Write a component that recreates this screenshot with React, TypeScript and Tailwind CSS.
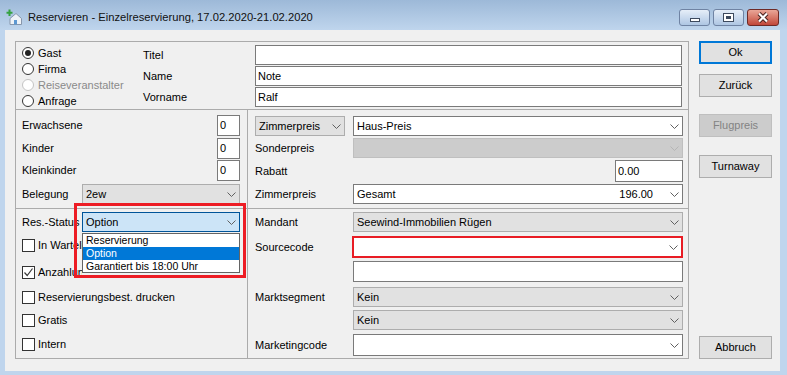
import React from "react";

const Chevron = ({ color = "#606060" }: { color?: string }) => (
  <svg width="9" height="5" viewBox="0 0 9 5">
    <path d="M0.5 0.5 L4.5 4.5 L8.5 0.5" stroke={color} fill="none" strokeWidth="1" />
  </svg>
);

type ComboProps = {
  text?: string;
  right?: string;
  variant?: "white" | "gray" | "disabled" | "focus" | "red";
  cls: string;
};

const Combo = ({ text = "", right, variant = "white", cls }: ComboProps) => {
  const v =
    variant === "white"
      ? "bg-white border border-[#7a7a7a]"
      : variant === "gray"
      ? "bg-[#e1e1e1] border border-[#adadad]"
      : variant === "disabled"
      ? "bg-[#cccccc] border border-[#bfbfbf]"
      : variant === "focus"
      ? "bg-[#cce4f7] border border-[#005499]"
      : "bg-white border-2 border-[#e81c24]";
  return (
    <div className={`flex items-center ${v} ${cls}`}>
      <span className="flex-1 pl-[3px] whitespace-nowrap overflow-hidden">{text}</span>
      {right && <span className="mr-[13px]">{right}</span>}
      <div className="w-[16px] flex justify-center">
        <Chevron color={variant === "disabled" ? "#b5b5b5" : "#606060"} />
      </div>
    </div>
  );
};

const Input = ({ text = "", cls }: { text?: string; cls: string }) => (
  <div className={`flex items-center bg-white border border-[#7a7a7a] pl-[2px] ${cls}`}>{text}</div>
);

const Radio = ({ label, checked, disabled }: { label: string; checked?: boolean; disabled?: boolean }) => (
  <div className="h-[16px] flex items-center">
    <div
      className={`w-[12px] h-[12px] rounded-full border bg-white flex items-center justify-center ${
        disabled ? "border-[#c4c4c4] bg-[#f4f4f4]" : "border-[#333333]"
      }`}
    >
      {checked && <div className="w-[6px] h-[6px] rounded-full bg-[#222222]" />}
    </div>
    <span className={`ml-[4px] ${disabled ? "text-[#8a8a8a]" : ""}`}>{label}</span>
  </div>
);

const Check = ({ label, checked, cls, clip }: { label: string; checked?: boolean; cls: string; clip?: boolean }) => (
  <div className={`h-[13px] flex items-center whitespace-nowrap ${cls}`}>
    <div className="w-[13px] h-[13px] border border-[#333333] bg-white flex items-center justify-center shrink-0">
      {checked && (
        <svg width="11" height="11" viewBox="0 0 11 11">
          <path d="M1.5 5.5 L4.2 8.5 L9.5 1.5" stroke="#3a3a3a" strokeWidth="1.2" fill="none" />
        </svg>
      )}
    </div>
    <span className={`ml-[3px] ${clip ? "w-[44px] overflow-hidden" : ""}`}>{label}</span>
  </div>
);

const Btn = ({ label, cls = "", variant = "normal" }: { label: string; cls?: string; variant?: "normal" | "default" | "disabled" }) => {
  const v =
    variant === "default"
      ? "border-2 border-[#0078d7] bg-[#e1e1e1]"
      : variant === "disabled"
      ? "border border-[#bfbfbf] bg-[#cccccc] text-[#838383]"
      : "border border-[#adadad] bg-[#e1e1e1]";
  return <div className={`w-[73px] h-[23px] flex items-center justify-center ${v} ${cls}`}>{label}</div>;
};

export default function App() {
  return (
    <div className="relative w-[787px] h-[375px] overflow-hidden bg-[#bfd5ed] text-[11px] text-black font-['Liberation_Sans',Arial,sans-serif]">
      {/* Title bar */}
      <div className="h-[30px] flex items-start pt-[9px] bg-gradient-to-b from-[#9db9d8] to-[#bfd5ed]">
        <div className="ml-[6px] w-[16px] h-[16px]">
          <svg width="16" height="16" viewBox="0 0 16 16">
            <path d="M4 9.5 L10 4.5 L15.5 9.5 L15.5 15.5 L4 15.5 Z" fill="#eef2f7" stroke="#8796ab" strokeWidth="1" />
            <rect x="8" y="11" width="3" height="4.5" fill="#5d98d2" />
            <path d="M3.5 0.5 V7 M0.5 3.7 H6.5" stroke="#35a240" strokeWidth="2" />
          </svg>
        </div>
        <div className="ml-[6px] leading-[16px] text-[11.2px] text-[#111111]">
          Reservieren - Einzelreservierung, 17.02.2020-21.02.2020
        </div>
        <div className="ml-auto mr-[8px] flex gap-[3px]">
          <div className="w-[31px] h-[17px] rounded-[3px] border border-[#6f83a3] bg-gradient-to-b from-[#e6eef8] to-[#aec6e3] flex items-end justify-center pb-[3px]">
            <div className="w-[10px] h-[4px] bg-white border border-[#3d4a5e]" />
          </div>
          <div className="w-[31px] h-[17px] rounded-[3px] border border-[#6f83a3] bg-gradient-to-b from-[#e6eef8] to-[#aec6e3] flex items-center justify-center">
            <div className="w-[11px] h-[9px] bg-white border border-[#3d4a5e] flex items-center justify-center">
              <div className="w-[5px] h-[3px] bg-[#3d4a5e]" />
            </div>
          </div>
          <div className="w-[32px] h-[17px] rounded-[3px] border border-[#6e2a26] bg-gradient-to-b from-[#e9a698] to-[#c1463a] flex items-center justify-center">
            <svg width="14" height="11" viewBox="0 0 14 11">
              <path d="M3 1.5 L11 9.5 M11 1.5 L3 9.5" stroke="#4a2320" strokeWidth="4.2" />
              <path d="M3 1.5 L11 9.5 M11 1.5 L3 9.5" stroke="#ffffff" strokeWidth="2.2" />
            </svg>
          </div>
        </div>
      </div>

      {/* Client area */}
      <div className="ml-[5px] w-[775px] h-[341px] bg-[#f0f0f0] flex pl-[10px] pt-[11px]">
        {/* Group box */}
        <div className="w-[674px] h-[318px] border border-[#ababab] flex flex-col">
          {/* Section 1 */}
          <div className="h-[67px] flex pt-[3px] pl-[6px]">
            <div className="w-[121px] flex flex-col">
              <Radio label="Gast" checked />
              <Radio label="Firma" />
              <Radio label="Reiseveranstalter" disabled />
              <Radio label="Anfrage" />
            </div>
            <div className="w-[112px] flex flex-col gap-[1px]">
              <div className="h-[20px] flex items-center">Titel</div>
              <div className="h-[20px] flex items-center">Name</div>
              <div className="h-[20px] flex items-center">Vorname</div>
            </div>
            <div className="w-[427px] flex flex-col gap-[1px]">
              <Input cls="h-[20px]" />
              <Input cls="h-[20px]" text="Note" />
              <Input cls="h-[20px]" text="Ralf" />
            </div>
          </div>
          <div className="h-px bg-[#ababab]" />
          {/* Section 2 */}
          <div className="h-[98px] flex">
            <div className="w-[231px] pt-[5px] pl-[6px] pr-[7px] flex flex-col">
              <div className="h-[21px] flex items-center justify-between">
                <span>Erwachsene</span>
                <Input cls="w-[23px] h-[21px]" text="0" />
              </div>
              <div className="h-[21px] mt-[2px] flex items-center justify-between">
                <span>Kinder</span>
                <Input cls="w-[23px] h-[21px]" text="0" />
              </div>
              <div className="h-[21px] mt-[1px] flex items-center justify-between">
                <span>Kleinkinder</span>
                <Input cls="w-[23px] h-[21px]" text="0" />
              </div>
              <div className="h-[20px] mt-[3px] flex items-center justify-between">
                <span>Belegung</span>
                <Combo variant="gray" text="2ew" cls="w-[158px] h-[20px]" />
              </div>
            </div>
            <div className="w-px bg-[#ababab]" />
            <div className="flex-1 pt-[6px] pl-[7px] pr-[5px] flex flex-col">
              <div className="h-[20px] flex items-center">
                <Combo variant="gray" text="Zimmerpreis" cls="w-[90px] h-[20px]" />
                <Combo text="Haus-Preis" cls="ml-auto w-[330px] h-[20px]" />
              </div>
              <div className="h-[20px] mt-[2px] flex items-center">
                <span>Sonderpreis</span>
                <Combo variant="disabled" cls="ml-auto w-[330px] h-[20px]" />
              </div>
              <div className="h-[22px] mt-[2px] flex items-center">
                <span>Rabatt</span>
                <Input cls="ml-auto w-[68px] h-[22px]" text="0.00" />
              </div>
              <div className="h-[20px] mt-[2px] flex items-center">
                <span>Zimmerpreis</span>
                <Combo text="Gesamt" right="196.00" cls="ml-auto w-[330px] h-[20px]" />
              </div>
            </div>
          </div>
          <div className="h-px bg-[#ababab]" />
          {/* Section 3 */}
          <div className="flex-1 flex">
            <div className="w-[231px] pt-[3px] pl-[6px] flex flex-col">
              <div className="h-[20px] flex items-center">
                <span className="w-[60px] overflow-hidden whitespace-nowrap">Res.-Status</span>
                <Combo variant="focus" text="Option" cls="w-[158px] h-[20px]" />
              </div>
              <Check label="In Warteliste" clip cls="mt-[7px]" />
              <Check label="Anzahlung" checked clip cls="mt-[14px]" />
              <Check label="Reservierungsbest. drucken" cls="mt-[12px]" />
              <Check label="Gratis" cls="mt-[10px]" />
              <Check label="Intern" cls="mt-[11px]" />
            </div>
            <div className="w-px bg-[#ababab]" />
            <div className="flex-1 pt-[3px] pl-[7px] pr-[5px] flex flex-col">
              <div className="h-[20px] flex items-center">
                <span>Mandant</span>
                <Combo variant="gray" text="Seewind-Immobilien Rügen" cls="ml-auto w-[330px] h-[20px]" />
              </div>
              <div className="h-[22px] mt-[4px] flex items-center">
                <span>Sourcecode</span>
                <Combo variant="red" cls="ml-auto w-[331px] h-[22px]" />
              </div>
              <div className="h-[21px] mt-[3px] flex items-center">
                <Input cls="ml-auto w-[330px] h-[21px]" />
              </div>
              <div className="h-[20px] mt-[5px] flex items-center">
                <span>Marktsegment</span>
                <Combo variant="gray" text="Kein" cls="ml-auto w-[330px] h-[20px]" />
              </div>
              <div className="h-[20px] mt-[3px] flex items-center">
                <Combo variant="gray" text="Kein" cls="ml-auto w-[330px] h-[20px]" />
              </div>
              <div className="h-[22px] mt-[4px] flex items-center">
                <span>Marketingcode</span>
                <Combo cls="ml-auto w-[330px] h-[22px]" />
              </div>
            </div>
          </div>
        </div>

        {/* Buttons */}
        <div className="ml-[10px] h-[318px] flex flex-col">
          <Btn label="Ok" variant="default" />
          <Btn label="Zurück" cls="mt-[10px]" />
          <Btn label="Flugpreis" variant="disabled" cls="mt-[17px]" />
          <Btn label="Turnaway" cls="mt-[18px]" />
          <Btn label="Abbruch" cls="mt-auto" />
        </div>
      </div>

      {/* Dropdown list overlay */}
      <div className="absolute left-[82px] top-[233px] w-[158px] h-[40px] bg-white border border-[#646464] flex flex-col text-[10.5px]">
        <div className="h-[13px] leading-[13px] pl-[3px]">Reservierung</div>
        <div className="h-[13px] leading-[13px] pl-[3px] bg-[#0078d7] text-white">Option</div>
        <div className="h-[13px] leading-[13px] pl-[3px]">Garantiert bis 18:00 Uhr</div>
      </div>

      {/* Red annotation */}
      <div className="absolute left-[74px] top-[203px] w-[172px] h-[75px] border-[3px] border-[#ed1c24]" />
    </div>
  );
}
